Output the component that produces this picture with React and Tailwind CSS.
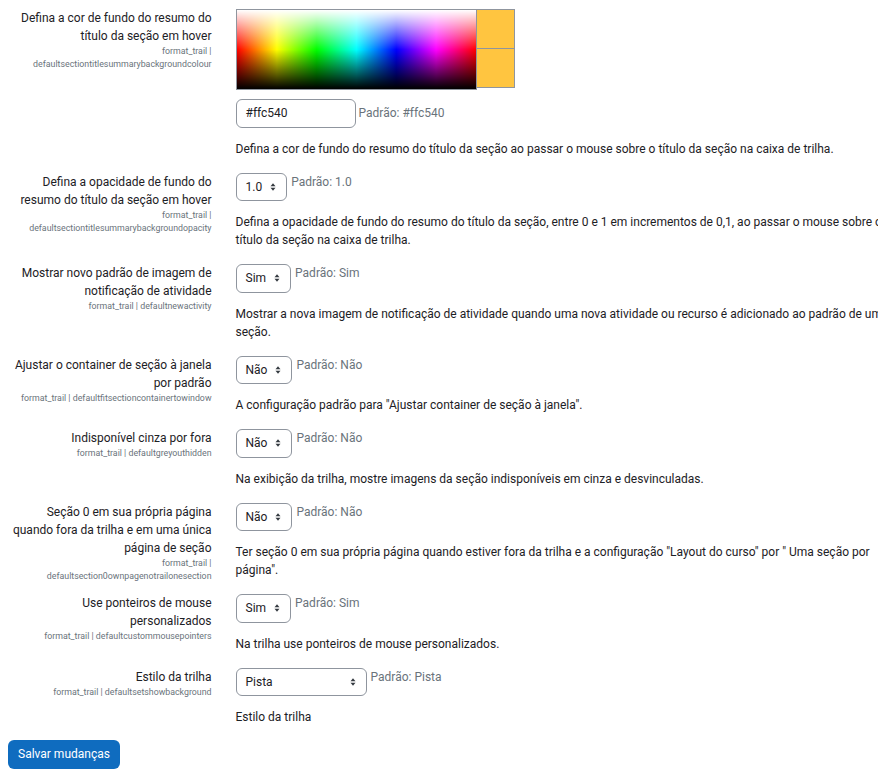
import React from 'react';

const rows = [
  {
    label: 'Defina a opacidade de fundo do resumo do título da seção em hover',
    key: 'format_trail | defaultsectiontitlesummarybackgroundopacity',
    value: '1.0',
    def: 'Padrão: 1.0',
    desc: 'Defina a opacidade de fundo do resumo do título da seção, entre 0 e 1 em incrementos de 0,1, ao passar o mouse sobre o título da seção na caixa de trilha.',
  },
  {
    label: 'Mostrar novo padrão de imagem de notificação de atividade',
    key: 'format_trail | defaultnewactivity',
    value: 'Sim',
    def: 'Padrão: Sim',
    desc: 'Mostrar a nova imagem de notificação de atividade quando uma nova atividade ou recurso é adicionado ao padrão de uma seção.',
  },
  {
    label: 'Ajustar o container de seção à janela por padrão',
    key: 'format_trail | defaultfitsectioncontainertowindow',
    value: 'Não',
    def: 'Padrão: Não',
    desc: 'A configuração padrão para "Ajustar container de seção à janela".',
  },
  {
    label: 'Indisponível cinza por fora',
    key: 'format_trail | defaultgreyouthidden',
    value: 'Não',
    def: 'Padrão: Não',
    desc: 'Na exibição da trilha, mostre imagens da seção indisponíveis em cinza e desvinculadas.',
  },
  {
    label: 'Seção 0 em sua própria página quando fora da trilha e em uma única página de seção',
    key: 'format_trail | defaultsection0ownpagenotrailonesection',
    value: 'Não',
    def: 'Padrão: Não',
    desc: 'Ter seção 0 em sua própria página quando estiver fora da trilha e a configuração "Layout do curso" por " Uma seção por página".',
  },
  {
    label: 'Use ponteiros de mouse personalizados',
    key: 'format_trail | defaultcustommousepointers',
    value: 'Sim',
    def: 'Padrão: Sim',
    desc: 'Na trilha use ponteiros de mouse personalizados.',
  },
  {
    label: 'Estilo da trilha',
    key: 'format_trail | defaultsetshowbackground',
    value: 'Pista',
    def: 'Padrão: Pista',
    desc: 'Estilo da trilha',
    wide: true,
  },
];

function Arrows() {
  return (
    <svg width="6" height="10" viewBox="0 0 6 10" className="absolute right-[10px] top-1/2 -translate-y-1/2">
      <path d="M0.5 4.2 L3 1.2 L5.5 4.2 Z" fill="#343a40" />
      <path d="M0.5 5.8 L3 8.8 L5.5 5.8 Z" fill="#343a40" />
    </svg>
  );
}

function Select({ value, wide }) {
  return (
    <div
      className={`relative h-[28.5px] flex items-center border border-[#8f959e] rounded-[6px] bg-white pl-[9px] pr-[24px] text-[#1d2125] ${wide ? 'w-[131px]' : ''}`}
    >
      {value}
      <Arrows />
    </div>
  );
}

function Label({ label, k }) {
  return (
    <div className="w-[223.5px] shrink-0 px-[12px] text-right">
      <div className="text-[#1d2125]">{label}</div>
      <div className="text-[8.8px] leading-[13.2px] text-[#6a737b]">{k}</div>
    </div>
  );
}

function ColourRow() {
  return (
    <div className="flex mb-[11px]">
      <Label
        label="Defina a cor de fundo do resumo do título da seção em hover"
        k="format_trail | defaultsectiontitlesummarybackgroundcolour"
      />
      <div className="flex-1 px-[12px] pb-[4px]">
        <div className="flex items-start">
          <div className="w-[241px] h-[81px] border border-[#8f959e] bg-[linear-gradient(to_right,#f00,#ff0,#0f0,#0ff,#00f,#f0f,#f00)]">
            <div className="w-full h-full bg-[linear-gradient(to_bottom,#fff,rgba(255,255,255,0)_50%,rgba(0,0,0,0)_50%,#000)]" />
          </div>
          <div className="flex flex-col -ml-px">
            <div className="w-[39px] h-[40px] border border-[#8f959e] bg-[#ffc540]" />
            <div className="w-[39px] h-[40px] -mt-px border border-[#8f959e] bg-[#ffc540]" />
          </div>
        </div>
        <div className="flex items-center mt-[9px]">
          <div className="w-[120px] h-[28.5px] flex items-center border border-[#8f959e] rounded-[6px] pl-[9px] text-[#1d2125]">
            #ffc540
          </div>
          <div className="ml-[3px] text-[#6a737b]">Padrão: #ffc540</div>
        </div>
        <div className="mt-[12px] text-[#1d2125]">
          Defina a cor de fundo do resumo do título da seção ao passar o mouse sobre o título da seção na caixa de trilha.
        </div>
      </div>
    </div>
  );
}

export default function App() {
  return (
    <div className="w-[878px] h-[777px] overflow-hidden bg-white font-['Roboto',sans-serif] text-[12px] leading-[18px]">
      <div className="w-[915px] pt-[9px]">
        <ColourRow />
        {rows.map((r, i) => (
          <div key={i} className="flex mb-[11px]">
            <Label label={r.label} k={r.key} />
            <div className="flex-1 px-[12px] pb-[4px]">
              <div className="flex items-start">
                <Select value={r.value} wide={r.wide} />
                <div className="ml-[4px] text-[#6a737b]">{r.def}</div>
              </div>
              <div className="mt-[12px] text-[#1d2125]">{r.desc}</div>
            </div>
          </div>
        ))}
        <button className="ml-[8px] -mt-[1.5px] h-[29px] px-[10px] rounded-[6px] bg-[#0f6cbf] text-white">
          Salvar mudanças
        </button>
      </div>
    </div>
  );
}
